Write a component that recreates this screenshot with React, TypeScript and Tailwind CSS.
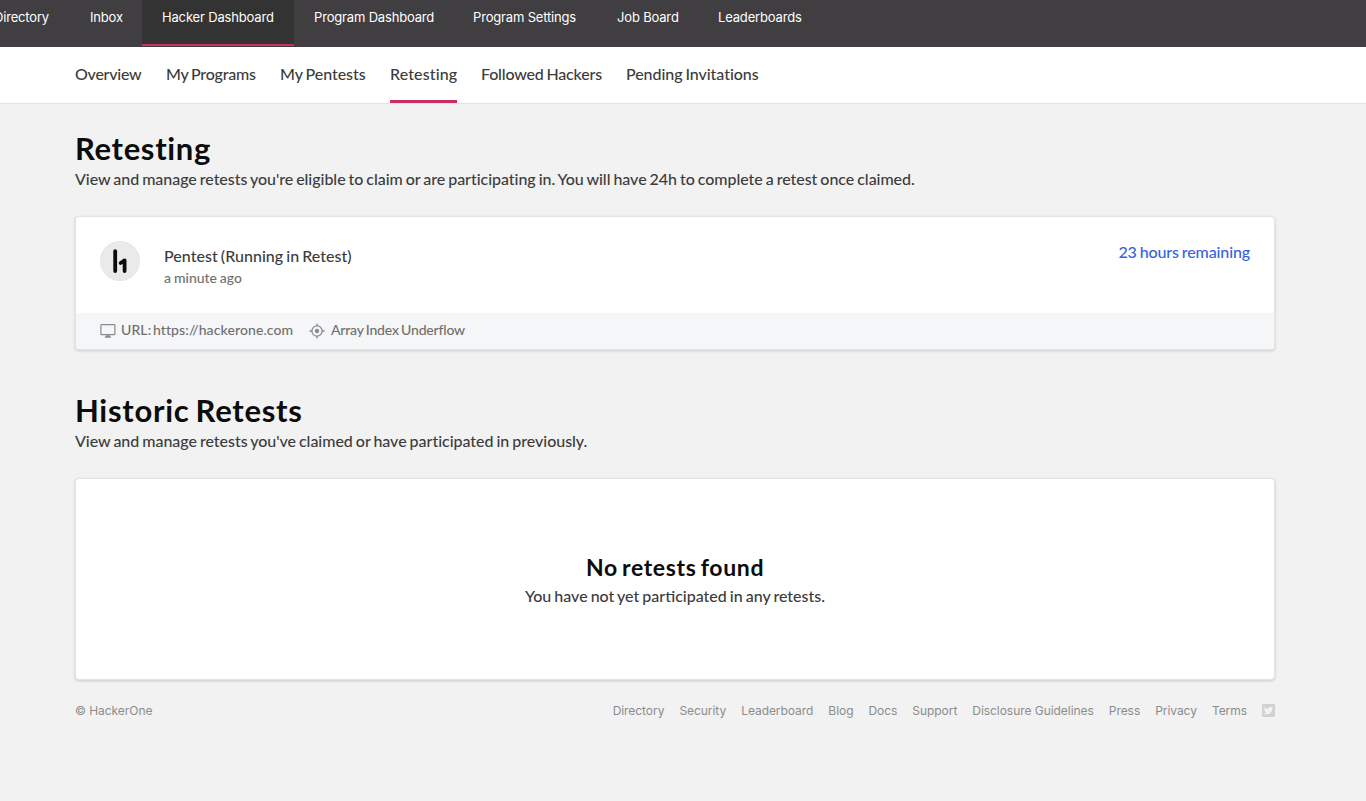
import type { ReactNode } from 'react';
import { FaTwitterSquare } from 'react-icons/fa';

const topNav = [
  { label: 'Directory', size: 'w-[96px]' },
  { label: 'Inbox', size: 'w-[72px]' },
  { label: 'Hacker Dashboard', size: 'w-[152px]', active: true },
  { label: 'Program Dashboard', size: 'w-[159px]' },
  { label: 'Program Settings', size: 'w-[144px]' },
  { label: 'Job Board', size: 'w-[101px]' },
  { label: 'Leaderboards', size: 'w-[124px]' },
];

const subNav = [
  { label: 'Overview', style: 'w-[67px] tracking-[-0.25px]' },
  { label: 'My Programs', style: 'w-[90px] tracking-[-0.22px]' },
  { label: 'My Pentests', style: 'w-[86px] tracking-[-0.05px]' },
  { label: 'Retesting', style: 'w-[67px] tracking-[0.12px]', active: true },
  { label: 'Followed Hackers', style: 'w-[121px] tracking-[-0.18px]' },
  { label: 'Pending Invitations', style: 'w-[133px] tracking-[-0.06px]' },
];

const footerLinks = [
  'Directory',
  'Security',
  'Leaderboard',
  'Blog',
  'Docs',
  'Support',
  'Disclosure Guidelines',
  'Press',
  'Privacy',
  'Terms',
];

function MonitorIcon() {
  return (
    <svg width="16" height="14" viewBox="0 0 16 14" fill="none" stroke="#8b8b8b">
      <rect x="0.9" y="0.7" width="14" height="10" rx="0.7" strokeWidth="1.2" />
      <path d="M6.2 11.2h3.4l.7 1.3h.6v1.2H4.9v-1.2h.6z" fill="#8b8b8b" stroke="none" />
    </svg>
  );
}

function TargetIcon() {
  return (
    <svg width="16" height="16" viewBox="0 0 16 16" fill="none" stroke="#8b8b8b" strokeWidth="1.3">
      <circle cx="8" cy="8" r="5.1" />
      <circle cx="8" cy="8" r="2.2" fill="#8b8b8b" stroke="none" />
      <path d="M8 .4v2.6M8 13v2.6M.4 8H3M13 8h2.6" />
    </svg>
  );
}

function Avatar() {
  return (
    <svg className="shrink-0" width="40" height="40" viewBox="0 0 40 40">
      <circle cx="20" cy="20" r="19.7" fill="#eaeaea" stroke="#e0e0e0" strokeWidth="0.6" />
      <path d="M15.2 10.2v19.9" stroke="#0c0c0c" strokeWidth="3.8" strokeLinecap="round" />
      <path d="M20.6 22l4-2.6v10.7" fill="none" stroke="#0c0c0c" strokeWidth="3.8" strokeLinecap="round" strokeLinejoin="round" />
    </svg>
  );
}

function Card({ children, className }: { children: ReactNode; className: string }) {
  return (
    <div className={`overflow-hidden rounded-[4px] border border-[#e4e4e4] bg-white shadow-[0_1px_3px_rgba(0,0,0,0.17)] ${className}`}>
      {children}
    </div>
  );
}

export default function App() {
  return (
    <div className="min-h-[801px] overflow-hidden whitespace-nowrap bg-[#f2f2f2] font-['Lato',sans-serif] text-base font-medium text-[#3c3c3c]">
      <header className="h-[47px] overflow-hidden bg-[#413e41]">
        <nav className="-ml-[26px] flex font-['Inter',sans-serif] text-[13px] font-normal tracking-[-0.17px] text-white">
          {topNav.map(({ label, size, active }) => (
            <a
              key={label}
              className={`h-[46px] shrink-0 px-5 pt-[7px] leading-[21px] ${size} ${active ? 'border-b-2 border-[#c9305f] bg-[#333333]' : ''}`}
            >
              {label}
            </a>
          ))}
        </nav>
      </header>

      <nav className="flex h-[57px] gap-[24px] border-b border-[#e3e3e3] bg-white pl-[75px] [word-spacing:-1px]">
        {subNav.map(({ label, style, active }) => (
          <a key={label} className={`h-[56px] shrink-0 pt-[15px] leading-[24px] ${style} ${active ? 'border-b-[3px] border-[#c9305f]' : ''}`}>
            {label}
          </a>
        ))}
      </nav>

      <main className="ml-[75px] w-[1200px]">
        <section className="pt-[24px]">
          <h1 className="text-[31px] font-bold leading-[40px] tracking-[0.65px] text-[#0c0c0c]">Retesting</h1>
          <p className="-mt-px leading-[24px] tracking-[-0.04px] [word-spacing:-1px]">
            View and manage retests you're eligible to claim or are participating in. You will have 24h to complete a retest once claimed.
          </p>
          <Card className="mt-[25px] h-[134px]">
            <div className="flex h-[96px] items-start px-6 pt-6">
              <Avatar />
              <div className="ml-6 pt-[3px]">
                <div className="leading-[24px] tracking-[0.03px] [word-spacing:-1px]">Pentest (Running in Retest)</div>
                <div className="text-sm leading-[20px] tracking-[-0.03px] text-[#707070] [word-spacing:-0.5px]">a minute ago</div>
              </div>
              <div className="-mt-px ml-auto leading-[24px] tracking-[-0.12px] text-[#3562e3] [word-spacing:-1px]">23 hours remaining</div>
            </div>
            <div className="flex h-[36px] items-center bg-[#f5f6f8] px-6 text-sm text-[#707070]">
              <MonitorIcon />
              <span className="mb-[2px] ml-[5px] w-[173px] tracking-[0.1px] [word-spacing:-2px]">URL: https://hackerone.com</span>
              <span className="ml-[15px]">
                <TargetIcon />
              </span>
              <span className="mb-[2px] ml-[6px] tracking-[-0.19px] [word-spacing:-1px]">Array Index Underflow</span>
            </div>
          </Card>
        </section>

        <section className="pt-[40px]">
          <h1 className="text-[31px] font-bold leading-[40px] tracking-[0.7px] text-[#0c0c0c] [word-spacing:-2px]">Historic Retests</h1>
          <p className="-mt-px leading-[24px] tracking-[-0.03px] [word-spacing:-1px]">
            View and manage retests you've claimed or have participated in previously.
          </p>
          <Card className="mt-[25px] flex h-[202px] flex-col items-center pt-[72px]">
            <h2 className="text-[23px] font-bold leading-[32px] tracking-[0.65px] text-[#0c0c0c] [word-spacing:-2px]">No retests found</h2>
            <p className="mt-px leading-[24px] [word-spacing:-1px]">You have not yet participated in any retests.</p>
          </Card>
        </section>

        <footer className="mt-[21px] flex h-[20px] items-center font-['Inter',sans-serif] text-xs font-normal tracking-[-0.05px] text-[#8c8c8c]">
          <span>© HackerOne</span>
          <div className="ml-auto flex items-center gap-[15px]">
            {footerLinks.map((link) => (
              <a key={link}>{link}</a>
            ))}
            <FaTwitterSquare size={15} className="-mx-px -mt-px text-[#d2d2d2]" />
          </div>
        </footer>
      </main>
    </div>
  );
}
